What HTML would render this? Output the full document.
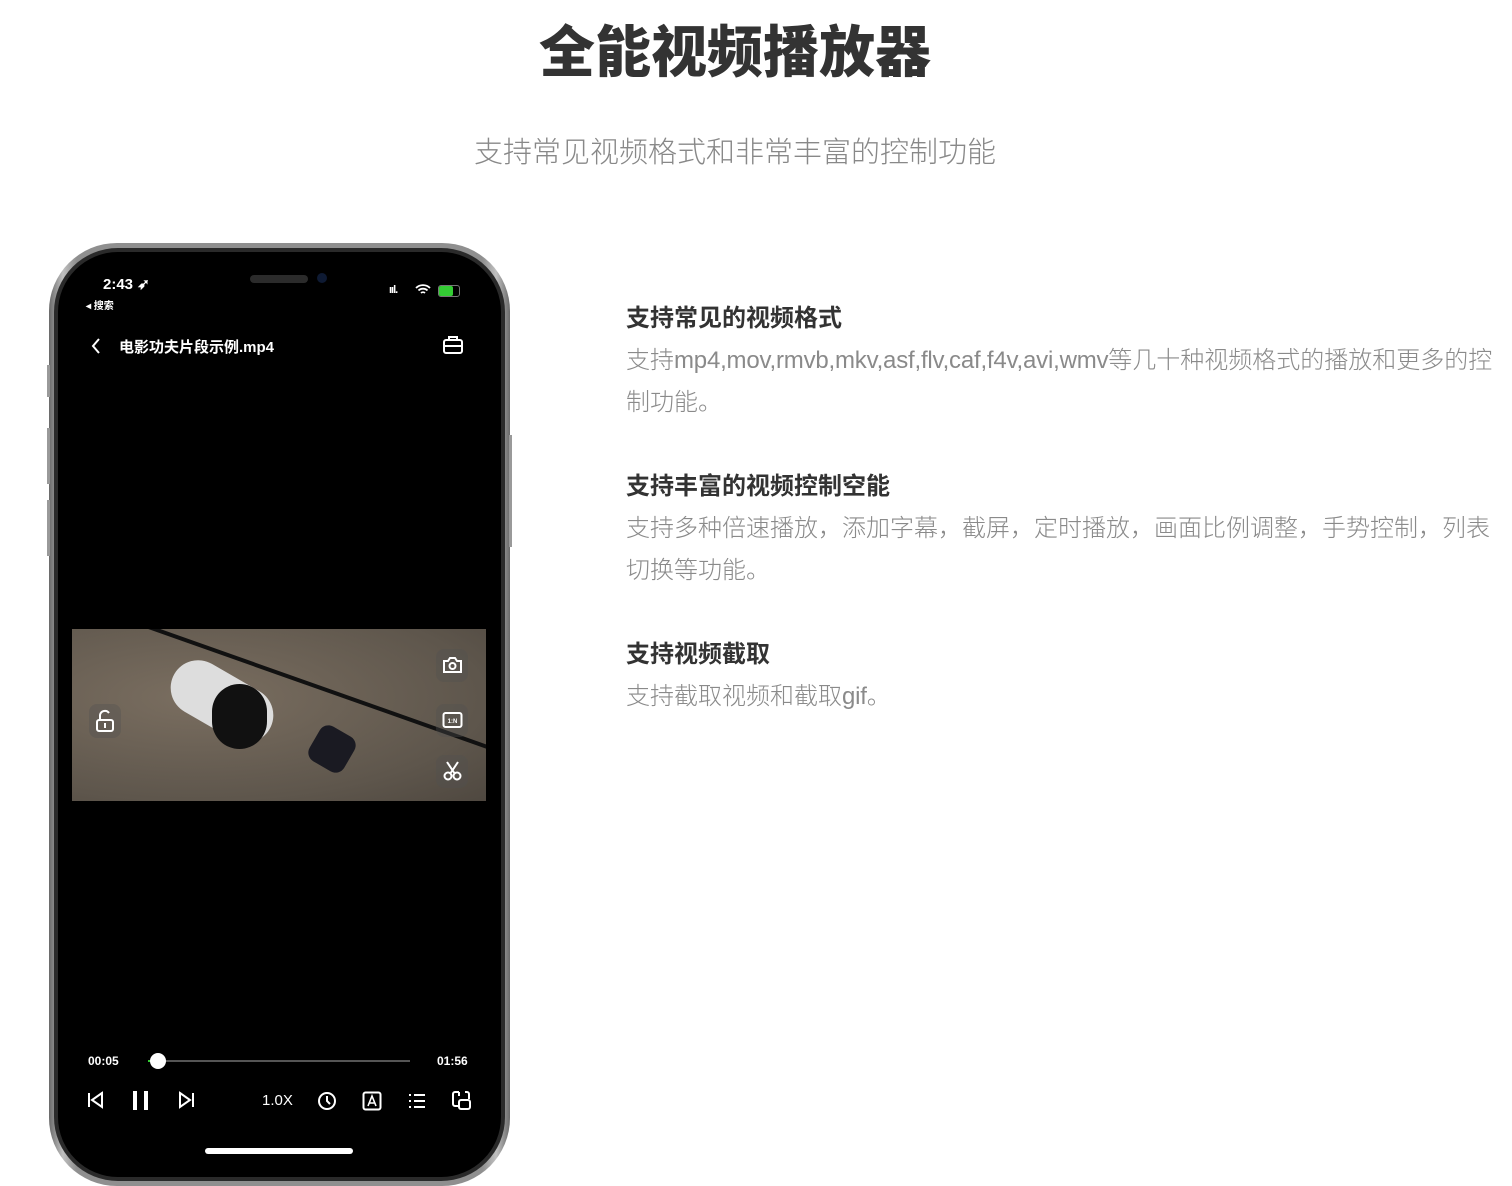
<!DOCTYPE html>
<html><head><meta charset="utf-8"><style>
html,body{margin:0;padding:0;background:#fff;width:1512px;height:1186px;overflow:hidden;position:relative;font-family:"Liberation Sans","Noto Sans CJK SC",sans-serif}
.abs{position:absolute}
h1{position:absolute;left:0;width:1470px;text-align:center;top:18px;margin:0;font-size:56px;font-weight:900;color:#333;line-height:70px}
.sub{left:0;width:1470px;text-align:center;top:133px;font-size:29px;color:#888;font-weight:300;line-height:40px}
.col{left:626px;width:872px}
.col h3{margin:0;font-size:24px;font-weight:700;color:#333;line-height:34px}
.col p{margin:0;font-size:24px;color:#8a8a8a;font-weight:300;line-height:42px}
.lat{letter-spacing:-0.2px}
.w{color:#fff;font-weight:700}
</style></head><body>
<h1>全能视频播放器</h1>
<div class="abs sub">支持常见视频格式和非常丰富的控制功能</div>

<div class="abs col" style="top:302px"><h3>支持常见的视频格式</h3><p style="margin-top:4px">支持<span class="lat">mp4,mov,rmvb,mkv,asf,flv,caf,f4v,avi,wmv</span>等几十种视频格式的播放和更多的控制功能。</p></div>
<div class="abs col" style="top:470px"><h3>支持丰富的视频控制空能</h3><p style="margin-top:4px">支持多种倍速播放，添加字幕，截屏，定时播放，画面比例调整，手势控制，列表切换等功能。</p></div>
<div class="abs col" style="top:638px"><h3>支持视频截取</h3><p style="margin-top:4px">支持截取视频和截取<span class="lat">gif</span>。</p></div>

<!-- phone -->
<div class="abs" style="left:49px;top:243px;width:461px;height:943px;border-radius:68px;background:linear-gradient(90deg,#6a6a6a,#c0c0c0 3%,#8f8f8f 6%,#8f8f8f 94%,#c0c0c0 97%,#6a6a6a)"></div>
<div class="abs" style="left:47px;top:365px;width:3px;height:32px;background:#999"></div>
<div class="abs" style="left:47px;top:428px;width:3px;height:56px;background:#999"></div>
<div class="abs" style="left:47px;top:500px;width:3px;height:56px;background:#999"></div>
<div class="abs" style="left:509px;top:435px;width:3px;height:112px;background:#999"></div>
<div class="abs" style="left:54px;top:248px;width:451px;height:933px;border-radius:64px;background:#2a2a2a"></div>
<div class="abs" style="left:58px;top:252px;width:443px;height:925px;border-radius:60px;background:#000"></div>
<div class="abs" style="left:250px;top:275px;width:58px;height:8px;border-radius:4px;background:#2b2b2b"></div>
<div class="abs" style="left:317px;top:273px;width:10px;height:10px;border-radius:5px;background:#0e1a33"></div>

<div class="abs w" style="left:103px;top:275px;font-size:15px">2:43 ➶</div>
<div class="abs w" style="left:86px;top:297px;font-size:10px">◂ 搜索</div>
<div class="abs w" style="left:389px;top:284px;font-size:11px;letter-spacing:-1px">ııl.</div>
<svg class="abs" style="left:415px;top:284px" width="16" height="12" viewBox="0 0 16 12"><path d="M1 4a10 10 0 0 1 14 0M3.5 6.5a6.5 6.5 0 0 1 9 0M6 9a3 3 0 0 1 4 0" stroke="#fff" stroke-width="1.8" fill="none"/></svg>
<div class="abs" style="left:438px;top:285px;width:20px;height:10px;border-radius:3px;border:1px solid #777"><div style="width:14px;height:10px;background:#3c3;border-radius:2px"></div></div>

<svg class="abs" style="left:90px;top:337px" width="12" height="18" viewBox="0 0 12 18"><path d="M9 2 3 9l6 7" stroke="#fff" stroke-width="2" fill="none"/></svg>
<div class="abs w" style="left:119px;top:336px;font-size:15px">电影功夫片段示例.mp4</div>
<svg class="abs" style="left:442px;top:335px" width="22" height="20" viewBox="0 0 22 20"><rect x="2" y="5" width="18" height="13" rx="2" stroke="#fff" stroke-width="2" fill="none"/><path d="M7 5V2h8v3M2 11h18" stroke="#fff" stroke-width="2" fill="none"/></svg>

<!-- video -->
<div class="abs" style="left:72px;top:629px;width:414px;height:172px;overflow:hidden;background:radial-gradient(ellipse at 30% 40%,#7a6e60,#5e564c 70%,#4f4840)">
<div class="abs" style="left:60px;top:-10px;width:520px;height:4px;background:#111;transform-origin:0 0;transform:rotate(19.5deg)"></div>
<div class="abs" style="left:95px;top:45px;width:110px;height:55px;background:#ddd;border-radius:30px;transform:rotate(30deg)"></div>
<div class="abs" style="left:140px;top:55px;width:55px;height:65px;background:#111;border-radius:30px"></div>
<div class="abs" style="left:240px;top:100px;width:40px;height:40px;background:#1a1a22;border-radius:10px;transform:rotate(30deg)"></div>
</div>
<div class="abs" style="left:89px;top:704px;width:32px;height:34px;border-radius:8px;background:rgba(80,80,80,.35)"></div>
<svg class="abs" style="left:95px;top:709px" width="20" height="24" viewBox="0 0 20 24"><path d="M5 11V6a5 5 0 0 1 9-2" stroke="#fff" stroke-width="2" fill="none"/><rect x="2" y="11" width="16" height="11" rx="2" stroke="#fff" stroke-width="2" fill="none"/><rect x="9" y="14" width="2" height="5" fill="#fff"/></svg>
<div class="abs" style="left:436px;top:649px;width:32px;height:33px;border-radius:8px;background:rgba(80,80,80,.35)"></div>
<svg class="abs" style="left:442px;top:655px" width="21" height="20" viewBox="0 0 21 20"><path d="M2 6h4l2-3h5l2 3h4v11H2z" stroke="#fff" stroke-width="2" fill="none"/><circle cx="10.5" cy="11" r="3" stroke="#fff" stroke-width="2" fill="none"/></svg>
<div class="abs" style="left:436px;top:704px;width:32px;height:33px;border-radius:8px;background:rgba(80,80,80,.35)"></div>
<svg class="abs" style="left:442px;top:711px" width="21" height="18" viewBox="0 0 21 18"><rect x="1.5" y="2" width="18" height="14" rx="2" stroke="#fff" stroke-width="2" fill="none"/><text x="10.5" y="12" font-size="6" fill="#fff" text-anchor="middle" font-family="Liberation Sans" font-weight="bold">1:N</text></svg>
<div class="abs" style="left:436px;top:755px;width:32px;height:33px;border-radius:8px;background:rgba(80,80,80,.35)"></div>
<svg class="abs" style="left:442px;top:760px" width="21" height="22" viewBox="0 0 21 22"><path d="M5 2l8 12M16 2 8 14" stroke="#fff" stroke-width="2"/><circle cx="6" cy="16" r="3.5" stroke="#fff" stroke-width="2" fill="none"/><circle cx="15" cy="16" r="3.5" stroke="#fff" stroke-width="2" fill="none"/></svg>

<!-- controls -->
<div class="abs w" style="left:88px;top:1054px;font-size:12px">00:05</div>
<div class="abs w" style="left:437px;top:1054px;font-size:12px">01:56</div>
<div class="abs" style="left:148px;top:1060px;width:262px;height:2px;background:#555"></div>
<div class="abs" style="left:148px;top:1060px;width:8px;height:2px;background:#3c3"></div>
<div class="abs" style="left:150px;top:1053px;width:16px;height:16px;border-radius:8px;background:#fff"></div>
<svg class="abs" style="left:86px;top:1090px" width="20" height="20" viewBox="0 0 20 20"><path d="M3 3v14M16 3 6 10l10 7z" stroke="#fff" stroke-width="2" fill="none"/></svg>
<div class="abs" style="left:133px;top:1091px;width:4px;height:19px;background:#fff"></div>
<div class="abs" style="left:144px;top:1091px;width:4px;height:19px;background:#fff"></div>
<svg class="abs" style="left:176px;top:1090px" width="20" height="20" viewBox="0 0 20 20"><path d="M17 3v14M4 3l10 7-10 7z" stroke="#fff" stroke-width="2" fill="none"/></svg>
<div class="abs w" style="left:262px;top:1092px;font-size:15px;font-weight:400">1.0X</div>
<svg class="abs" style="left:317px;top:1091px" width="20" height="20" viewBox="0 0 20 20"><circle cx="10" cy="10" r="8" stroke="#fff" stroke-width="2" fill="none"/><path d="M10 5v5l3 3" stroke="#fff" stroke-width="2" fill="none"/></svg>
<svg class="abs" style="left:362px;top:1091px" width="20" height="20" viewBox="0 0 20 20"><rect x="1.5" y="1.5" width="17" height="17" rx="2" stroke="#fff" stroke-width="2" fill="none"/><path d="M6 15l4-10 4 10M7.5 12h5" stroke="#fff" stroke-width="1.6" fill="none"/></svg>
<svg class="abs" style="left:407px;top:1091px" width="20" height="20" viewBox="0 0 20 20"><path d="M2 4h2M7 4h11M2 10h2M7 10h11M2 16h2M7 16h11" stroke="#fff" stroke-width="2"/></svg>
<svg class="abs" style="left:451px;top:1090px" width="21" height="21" viewBox="0 0 21 21"><path d="M8 2H4a2 2 0 0 0-2 2v10a2 2 0 0 0 2 2h3M8 2v4M14 2h2a2 2 0 0 1 2 2v5" stroke="#fff" stroke-width="2" fill="none"/><rect x="8" y="10" width="11" height="9" rx="2" stroke="#fff" stroke-width="2" fill="none"/></svg>
<div class="abs" style="left:205px;top:1148px;width:148px;height:6px;border-radius:3px;background:#fff"></div>
</body></html>
